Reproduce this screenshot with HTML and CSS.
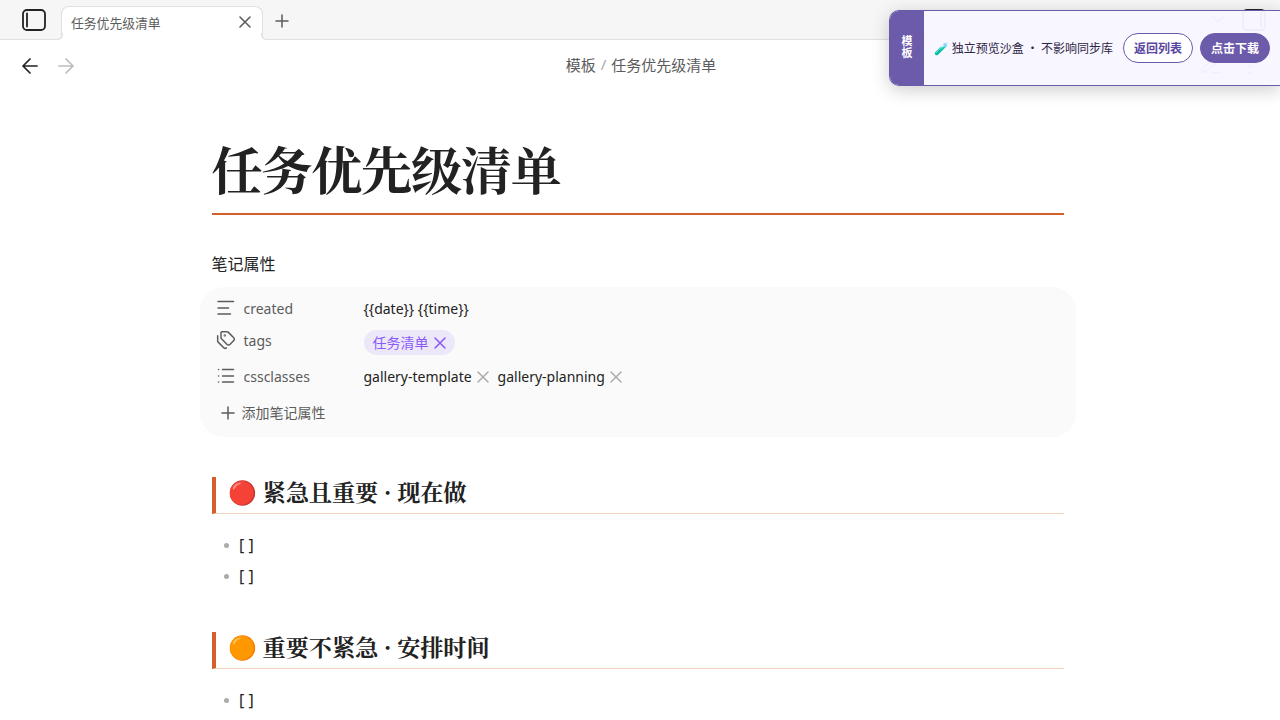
FILE: index.html
```
<!DOCTYPE html>
<html lang="zh-CN">
<head>
    <meta charset="UTF-8">
    <meta name="viewport" content="width=device-width, initial-scale=1.0">
    <title>任务优先级清单</title>
    <link rel="stylesheet" href="styles.css">
</head>
<body>
    <header class="tab-bar">
        <svg class="sidebar-icon" viewBox="0 0 24 22"><rect x="1" y="1" width="22" height="20" rx="4"/><path d="M5 4.5v13"/></svg>
        <div class="tab">
            <span>任务优先级清单</span>
            <svg class="tab-close" viewBox="0 0 12 12"><path d="M1 1l10 10M11 1L1 11"/></svg>
        </div>
        <svg class="new-tab" viewBox="0 0 14 14"><path d="M7 1v12M1 7h12"/></svg>
        <div class="tab-bar-right">
            <svg class="chevron" viewBox="0 0 12 7"><path d="M1 1l5 5 5-5"/></svg>
            <svg class="sidebar-icon" viewBox="0 0 24 22"><rect x="1" y="1" width="22" height="20" rx="4"/><path d="M19 4.5v13"/></svg>
        </div>
    </header>

    <nav class="view-header">
        <div class="nav-buttons">
            <svg viewBox="0 0 18 18"><path d="M16 9H2M9 2L2 9l7 7"/></svg>
            <svg class="disabled" viewBox="0 0 18 18"><path d="M2 9h14M9 2l7 7-7 7"/></svg>
        </div>
        <div class="breadcrumb"><span>模板</span><span class="slash">/</span><span>任务优先级清单</span></div>
        <div class="view-actions">
            <svg viewBox="0 0 22 16"><path d="M1.500 14.500l1-4L13 1.500q2-1.200 3.300.5t0 3L5.500 13.500zM12 14.500h9"/></svg>
            <svg class="more" viewBox="0 0 4 18"><circle cx="2" cy="2" r="1.500"/><circle cx="2" cy="9" r="1.500"/><circle cx="2" cy="16" r="1.500"/></svg>
        </div>
    </nav>

    <main class="note">
        <h1>任务优先级清单</h1>
        <div class="props-title">笔记属性</div>
        <section class="props">
            <div class="prop">
                <svg viewBox="0 0 18 18"><path d="M1 2.500h15.500M1 9h10.500M1 15h12.500"/></svg>
                <span class="key">created</span>
                <span class="value">{{date}} {{time}}</span>
            </div>
            <div class="prop prop-tags">
                <svg viewBox="0 0 24 24"><path d="M13.172 2a2 2 0 0 1 1.414.586l6.710 6.710a2.400 2.400 0 0 1 0 3.408l-4.592 4.592a2.400 2.400 0 0 1-3.408 0l-6.710-6.710A2 2 0 0 1 6 9.172V3a1 1 0 0 1 1-1z"/><path d="M2 7v6.172a2 2 0 0 0 .586 1.414l6.710 6.710a2.400 2.400 0 0 0 3.191.193"/><circle cx="10.500" cy="6.500" r=".5"/></svg>
                <span class="key">tags</span>
                <span class="value"><span class="tag">任务清单<svg viewBox="0 0 12 12"><path d="M1 1l10 10M11 1L1 11"/></svg></span></span>
            </div>
            <div class="prop prop-classes">
                <svg viewBox="0 0 18 18"><path d="M5.500 2.500h11M5.500 9h11M5.500 15h11M1.500 2.500h.1M1.500 9h.1M1.500 15h.1"/></svg>
                <span class="key">cssclasses</span>
                <span class="value">
                    <span class="item">gallery-template<svg viewBox="0 0 12 12"><path d="M1 1l10 10M11 1L1 11"/></svg></span>
                    <span class="item">gallery-planning<svg viewBox="0 0 12 12"><path d="M1 1l10 10M11 1L1 11"/></svg></span>
                </span>
            </div>
            <div class="add-prop">
                <svg viewBox="0 0 14 14"><path d="M7 1v12M1 7h12"/></svg>
                <span>添加笔记属性</span>
            </div>
        </section>

        <h2>🔴 紧急且重要 · 现在做</h2>
        <ul>
            <li>[ ]</li>
            <li>[ ]</li>
        </ul>

        <h2>🟠 重要不紧急 · 安排时间</h2>
        <ul>
            <li>[ ]</li>
        </ul>
    </main>

    <aside class="preview-bar">
        <div class="preview-label">模板</div>
        <div class="preview-body">
            <span class="preview-text">🧪 独立预览沙盒 ・ 不影响同步库</span>
            <button class="btn">返回列表</button>
            <button class="btn btn-primary">点击下载</button>
        </div>
    </aside>
</body>
</html>
```
FILE: styles.css
```
* {
    margin: 0;
    padding: 0;
    box-sizing: border-box;
}

body {
    height: 720px;
    overflow: hidden;
    background: #fff;
    color: #222;
    font-family: "Noto Sans", "Noto Sans CJK SC", sans-serif;
    font-size: 16px;
}

svg {
    display: block;
    flex: none;
    fill: none;
    stroke: currentColor;
    stroke-width: 1.5;
    stroke-linecap: round;
    stroke-linejoin: round;
    overflow: visible;
}

.tab-bar {
    display: flex;
    align-items: center;
    height: 40px;
    padding: 0 14px 0 22px;
    background: #f6f6f6;
    border-bottom: 1px solid #e0e0e0;
}

.sidebar-icon {
    width: 24px;
    height: 22px;
    margin-top: 1px;
    stroke-width: 1.8;
}

.tab {
    position: relative;
    display: flex;
    align-items: center;
    justify-content: space-between;
    align-self: flex-end;
    width: 202px;
    height: 34px;
    margin: 0 12px -1px 15px;
    padding: 0 11px 3px 9px;
    background: #fff;
    border: 1px solid #e0e0e0;
    border-bottom: none;
    border-radius: 8px 8px 0 0;
    font-size: 12.8px;
    color: #5c5c5c;
}

/* rounded feet where the tab meets the bar */
.tab::before,
.tab::after {
    content: "";
    position: absolute;
    bottom: 0;
    width: 6px;
    height: 6px;
    border: 1px solid #e0e0e0;
    border-top: none;
}

.tab::before {
    left: -6px;
    border-left: none;
    border-bottom-right-radius: 6px;
    box-shadow: 2px 2px 0 #fff;
}

.tab::after {
    right: -6px;
    border-right: none;
    border-bottom-left-radius: 6px;
    box-shadow: -2px 2px 0 #fff;
}

.tab-close {
    width: 12px;
    height: 12px;
    stroke-width: 1.6;
}

.new-tab {
    width: 14px;
    height: 14px;
    margin-top: 2px;
    color: #5c5c5c;
}

.tab-bar-right {
    display: flex;
    align-items: center;
    gap: 18px;
    margin-left: auto;
}

.chevron {
    width: 12px;
    height: 7px;
    color: #5c5c5c;
}

.view-header {
    display: grid;
    grid-template-columns: 1fr auto 1fr;
    align-items: center;
    height: 52px;
    padding: 0 20px 0 21px;
}

.nav-buttons {
    display: flex;
    gap: 18px;
}

.nav-buttons svg {
    width: 18px;
    height: 18px;
    stroke-width: 1.7;
}

.nav-buttons .disabled {
    color: #bdbdbd;
}

.breadcrumb {
    display: flex;
    gap: 5px;
    padding: 0 0 3px 1px;
    font-size: 15px;
    color: #5c5c5c;
}

.slash {
    color: #ababab;
}

.view-actions {
    display: flex;
    align-items: center;
    justify-content: flex-end;
    gap: 26px;
    padding-right: 8px;
    color: #5c5c5c;
}

.view-actions svg {
    width: 22px;
    height: 16px;
}

.view-actions .more {
    width: 4px;
    height: 18px;
    fill: currentColor;
    stroke: none;
}

.note {
    width: 852px;
    margin-left: 212px;
    padding-top: 40px;
}

h1, h2 {
    font-family: "Noto Serif CJK SC", "Noto Serif SC", serif;
    font-weight: 700;
}

h1 {
    height: 83px;
    border-bottom: 2px solid #d35f2d;
    font-size: 51.2px;
    line-height: 72px;
    letter-spacing: -0.026em;
    text-indent: -0.5px;
}

.props-title {
    margin: 37px 0 0 -0.5px;
    line-height: 24px;
}

.props {
    height: 150px;
    margin: 11px -12px 40px;
    padding: 5px 16px;
    background: #fafafa;
    border-radius: 24px;
    font-size: 14px;
}

.prop {
    display: flex;
    align-items: center;
    height: 32px;
    color: #5c5c5c;
}

.prop > svg {
    width: 18px;
    height: 18px;
    margin: 0 8.5px 0 1px;
}

.prop-tags > svg {
    width: 20px;
    height: 20px;
    margin: 0 7.5px 0 0;
    stroke-width: 1.8;
}

.key {
    width: 120px;
}

.value {
    display: flex;
    gap: 9px;
    color: #222;
}

.tag {
    display: flex;
    align-items: center;
    gap: 5px;
    height: 25px;
    margin-top: 4px;
    padding: 0 9.5px 0 9px;
    border-radius: 13px;
    background: #ece8f9;
    color: #8a5cf5;
}

.tag svg {
    width: 12px;
    height: 12px;
    margin-top: 1px;
    stroke-width: 1.6;
}

.prop-classes {
    height: 40px;
}

.item {
    display: flex;
    align-items: center;
    gap: 5px;
}

.item svg {
    width: 12px;
    height: 12px;
    margin-top: 1px;
    color: #ababab;
}

.add-prop {
    display: flex;
    align-items: center;
    gap: 6.5px;
    height: 32px;
    padding-left: 5px;
    color: #5c5c5c;
}

.add-prop svg {
    width: 14px;
    height: 14px;
    margin-top: 1px;
}

h2 {
    height: 37px;
    padding-left: 12px;
    border-left: 4px solid #d35f2d;
    border-bottom: 1px solid #f4d0c1;
    font-size: 23.2px;
    line-height: 28px;
    letter-spacing: -0.004em;
}

ul {
    margin: 16px 0 40px;
    list-style: none;
}

li {
    display: flex;
    align-items: center;
    gap: 10px;
    height: 31px;
    padding-left: 12px;
    line-height: 27px;
}

li::before {
    content: "";
    width: 5px;
    height: 5px;
    border-radius: 50%;
    background: #ababab;
}

/* floats over the top-right corner of the app */
.preview-bar {
    position: absolute;
    top: 10px;
    right: 0;
    display: flex;
    width: 391px;
    height: 76px;
    border: 1px solid #6c5aab;
    border-right: none;
    border-radius: 10px 0 0 10px;
    background: rgba(248, 246, 255, 0.96);
    box-shadow: 0 4px 18px rgba(0, 0, 0, 0.2);
    overflow: hidden;
}

.preview-label {
    display: flex;
    align-items: center;
    justify-content: center;
    width: 34px;
    padding: 0 2px 2px 0;
    background: #6c5aab;
    color: #fff;
    font-size: 11px;
    font-weight: 700;
    line-height: 32px;
    letter-spacing: 1px;
    writing-mode: vertical-rl;
}

.preview-body {
    display: flex;
    align-items: center;
    gap: 7px;
    flex: 1;
    padding: 0 10px;
}

.preview-text {
    margin-right: auto;
    padding-bottom: 2px;
    font-family: "Noto Sans CJK SC", sans-serif;
    font-size: 12px;
    color: #2d2545;
    white-space: nowrap;
}

.btn {
    width: 70px;
    height: 30px;
    border: 1px solid #6c5aab;
    border-radius: 15px;
    background: #fff;
    color: #5a46a0;
    font-family: inherit;
    font-size: 12px;
    font-weight: 700;
}

.btn-primary {
    background: #6c5aab;
    color: #fff;
}
```
